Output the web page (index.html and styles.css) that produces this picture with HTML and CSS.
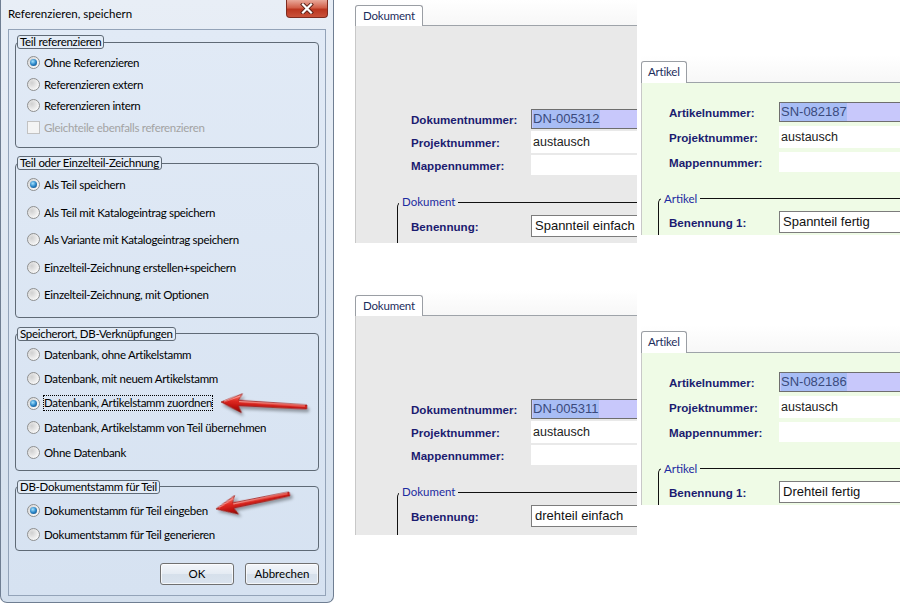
FILE: index.html
```html
<!DOCTYPE html>
<html lang="de">
<head>
    <meta charset="UTF-8">
    <meta name="viewport" content="width=device-width, initial-scale=1.0">
    <title>Referenzieren, speichern</title>
    <link rel="stylesheet" href="styles.css">
</head>
<body>
<div class="page">
    <div class="dialog">
        <div class="titlebar">
            <span class="title">Referenzieren, speichern</span>
            <span class="close-btn">
                <svg width="14" height="11" viewBox="0 0 14 11">
                    <path d="M3 1.5 L11 9.5 M11 1.5 L3 9.5" stroke="#5b2118" stroke-width="4" stroke-linecap="square"/>
                    <path d="M3 1.5 L11 9.5 M11 1.5 L3 9.5" stroke="#fff" stroke-width="2.2" stroke-linecap="square"/>
                </svg>
            </span>
        </div>
        <div class="client">
            <fieldset class="group g1">
                <legend>Teil referenzieren</legend>
                <div class="opt"><span class="radio on"></span>Ohne Referenzieren</div>
                <div class="opt"><span class="radio"></span>Referenzieren extern</div>
                <div class="opt"><span class="radio"></span>Referenzieren intern</div>
                <div class="opt disabled"><span class="check"></span>Gleichteile ebenfalls referenzieren</div>
            </fieldset>
            <fieldset class="group g2">
                <legend>Teil oder Einzelteil-Zeichnung</legend>
                <div class="opt"><span class="radio on"></span>Als Teil speichern</div>
                <div class="opt"><span class="radio"></span>Als Teil mit Katalogeintrag speichern</div>
                <div class="opt"><span class="radio"></span>Als Variante mit Katalogeintrag speichern</div>
                <div class="opt"><span class="radio"></span>Einzelteil-Zeichnung erstellen+speichern</div>
                <div class="opt"><span class="radio"></span>Einzelteil-Zeichnung, mit Optionen</div>
            </fieldset>
            <fieldset class="group g3">
                <legend>Speicherort, DB-Verknüpfungen</legend>
                <div class="opt"><span class="radio"></span>Datenbank, ohne Artikelstamm</div>
                <div class="opt"><span class="radio"></span>Datenbank, mit neuem Artikelstamm</div>
                <div class="opt"><span class="radio on"></span><span class="focus">Datenbank, Artikelstamm zuordnen</span></div>
                <div class="opt"><span class="radio"></span>Datenbank, Artikelstamm von Teil übernehmen</div>
                <div class="opt"><span class="radio"></span>Ohne Datenbank</div>
            </fieldset>
            <fieldset class="group g4">
                <legend>DB-Dokumentstamm für Teil</legend>
                <div class="opt"><span class="radio on"></span>Dokumentstamm für Teil eingeben</div>
                <div class="opt"><span class="radio"></span>Dokumentstamm für Teil generieren</div>
            </fieldset>
            <div class="buttons">
                <button class="btn">OK</button>
                <button class="btn">Abbrechen</button>
            </div>
        </div>
        <svg class="arrows" width="334" height="603" viewBox="0 0 334 603">
            <defs>
                <linearGradient id="red" x1="0" y1="-10" x2="0" y2="10" gradientUnits="userSpaceOnUse">
                    <stop offset="0" stop-color="#ff8a80"/>
                    <stop offset="0.4" stop-color="#e02a22"/>
                    <stop offset="0.75" stop-color="#b80f0b"/>
                    <stop offset="1" stop-color="#7a0000"/>
                </linearGradient>
                <filter id="shadow" x="-20%" y="-60%" width="140%" height="220%">
                    <feDropShadow dx="2" dy="3" stdDeviation="1.8" flood-color="#000" flood-opacity="0.35"/>
                </filter>
            </defs>
            <g transform="translate(220,402) rotate(3.3)" filter="url(#shadow)">
                <path d="M0 0 L21 -9.5 L17.5 -2.8 L86 -2 L86 2 L17.5 2.8 L21 9.5 Z" fill="url(#red)" stroke="#8a0a06" stroke-width="0.6"/>
                <path d="M3 -0.8 L19 -7 M18 -1.4 L84 -1" stroke="#ffb0a8" stroke-width="0.8" fill="none"/>
            </g>
            <g transform="translate(215,509) rotate(-11.6)" filter="url(#shadow)">
                <path d="M0 0 L21 -9.5 L17.5 -2.8 L75 -2 L75 2 L17.5 2.8 L21 9.5 Z" fill="url(#red)" stroke="#8a0a06" stroke-width="0.6"/>
                <path d="M3 -0.8 L19 -7 M18 -1.4 L73 -1" stroke="#ffb0a8" stroke-width="0.8" fill="none"/>
            </g>
        </svg>
    </div>

    <div class="shots">
        <div class="shot-row">
            <div class="panel doc">
                <div class="tabstrip"><span class="tab">Dokument</span></div>
                <div class="pbody">
                    <div class="frow"><label>Dokumentnummer:</label><span class="fld sel"><span class="hl">DN-005312</span></span></div>
                    <div class="frow"><label>Projektnummer:</label><span class="fld plain">austausch</span></div>
                    <div class="frow"><label>Mappennummer:</label><span class="fld plain empty"></span></div>
                    <fieldset class="sub">
                        <legend>Dokument</legend>
                        <div class="frow"><label>Benennung:</label><span class="fld box">Spannteil einfach</span></div>
                    </fieldset>
                </div>
            </div>
            <div class="panel art">
                <div class="tabstrip"><span class="tab">Artikel</span></div>
                <div class="pbody">
                    <div class="frow"><label>Artikelnummer:</label><span class="fld sel"><span class="hl">SN-082187</span></span></div>
                    <div class="frow"><label>Projektnummer:</label><span class="fld plain">austausch</span></div>
                    <div class="frow"><label>Mappennummer:</label><span class="fld plain empty"></span></div>
                    <fieldset class="sub">
                        <legend>Artikel</legend>
                        <div class="frow"><label>Benennung 1:</label><span class="fld box">Spannteil fertig</span></div>
                    </fieldset>
                </div>
            </div>
        </div>
        <div class="shot-row second">
            <div class="panel doc">
                <div class="tabstrip"><span class="tab">Dokument</span></div>
                <div class="pbody">
                    <div class="frow"><label>Dokumentnummer:</label><span class="fld sel"><span class="hl">DN-005311</span></span></div>
                    <div class="frow"><label>Projektnummer:</label><span class="fld plain">austausch</span></div>
                    <div class="frow"><label>Mappennummer:</label><span class="fld plain empty"></span></div>
                    <fieldset class="sub">
                        <legend>Dokument</legend>
                        <div class="frow"><label>Benennung:</label><span class="fld box">drehteil einfach</span></div>
                    </fieldset>
                </div>
            </div>
            <div class="panel art">
                <div class="tabstrip"><span class="tab">Artikel</span></div>
                <div class="pbody">
                    <div class="frow"><label>Artikelnummer:</label><span class="fld sel"><span class="hl">SN-082186</span></span></div>
                    <div class="frow"><label>Projektnummer:</label><span class="fld plain">austausch</span></div>
                    <div class="frow"><label>Mappennummer:</label><span class="fld plain empty"></span></div>
                    <fieldset class="sub">
                        <legend>Artikel</legend>
                        <div class="frow"><label>Benennung 1:</label><span class="fld box">Drehteil fertig</span></div>
                    </fieldset>
                </div>
            </div>
        </div>
    </div>
</div>
</body>
</html>
```

FILE: styles.css
```css
body {
    margin: 0;
    background: #fff;
    font-family: 'Lato', 'Segoe UI', sans-serif;
    font-size: 12px;
    color: #000;
}
.page {
    display: flex;
    align-items: flex-start;
    width: 900px;
    height: 604px;
    overflow: hidden;
}

/* dialog */
.dialog {
    position: relative;
    flex: none;
    width: 334px;
    height: 603px;
    box-sizing: border-box;
    border: 1px solid #6f7e92;
    border-top: none;
    border-radius: 0 0 7px 7px;
    background: linear-gradient(#e8eef6, #d3dfed);
    padding: 0 7px 6px;
    display: flex;
    flex-direction: column;
    font-size: 11.5px;
}
.titlebar {
    height: 29px;
    flex: none;
    display: flex;
    align-items: flex-start;
    justify-content: space-between;
}
.title {
    padding-top: 6px;
    line-height: 16px;
    color: #000;
}
.close-btn {
    width: 42px;
    height: 18px;
    margin-right: -2px;
    box-sizing: border-box;
    border: 1px solid #7e2b1f;
    border-top: none;
    border-radius: 0 0 4px 4px;
    background: linear-gradient(#e9a89a, #d2604a 45%, #bb3620 55%, #c9523a);
    display: flex;
    align-items: center;
    justify-content: center;
}
.client {
    flex: 1;
    border: 1px solid #93a3b8;
    background: linear-gradient(#e1eaf6, #d6e2f1);
    display: flex;
    flex-direction: column;
    letter-spacing: -0.3px;
}
.group {
    margin: 9px 6px 0;
    padding: 0;
    border: 1px solid #5f6a76;
    border-radius: 4px;
    min-width: 0;
}
.group legend {
    margin-left: 1px;
    padding: 0 2px;
    line-height: 12px;
    border: 1px solid #5f6a76;
    border-radius: 3px;
    background: #e3ecf7;
}
.g1 { margin-top: 5px; padding: 3px 0 9px; }
.g2 { margin-top: 8px; padding: 1px 0 8px; }
.g3 { padding: 1.5px 0 5px; }
.g4 { padding: 5px 0 3px; }
.opt {
    display: flex;
    align-items: center;
    padding-left: 11px;
}
.g1 .opt { height: 21.5px; }
.g2 .opt { height: 27.5px; }
.g3 .opt { height: 24.5px; }
.g4 .opt { height: 24px; }
.radio {
    position: relative;
    width: 13px;
    height: 13px;
    box-sizing: border-box;
    border-radius: 50%;
    border: 1px solid #8e8f8f;
    background: radial-gradient(circle at 35% 35%, #d0d0d0, #e8e8e8 45%, #fbfbfb 80%);
    margin-right: 4px;
    flex: none;
}
.radio.on::after {
    content: "";
    position: absolute;
    left: 2px;
    top: 2px;
    width: 7px;
    height: 7px;
    border-radius: 50%;
    background: radial-gradient(circle at 40% 35%, #a6e4ff, #2a86c8 50%, #0e3d70);
}
.check {
    width: 13px;
    height: 13px;
    box-sizing: border-box;
    border: 1px solid #c2c2c2;
    background: #f4f4f4;
    margin-right: 4px;
    flex: none;
}
.disabled { color: #a3a3a3; }
.focus {
    outline: 1px dotted #000;
    outline-offset: 0;
    line-height: 14px;
}
.buttons {
    display: flex;
    justify-content: flex-end;
    gap: 11px;
    margin: 12px 6px 0 0;
}
.btn {
    width: 74px;
    height: 22px;
    padding: 0;
    font-family: 'Lato', 'Segoe UI', sans-serif;
    font-size: 11.5px;
    color: #000;
    border: 1px solid #707070;
    border-radius: 3px;
    background: linear-gradient(#f3f6fa, #e4ebf3 50%, #d6e0eb 51%, #dae3ee);
    box-shadow: inset 0 0 0 1px rgba(255, 255, 255, 0.7);
}
.arrows {
    position: absolute;
    left: 0;
    top: 0;
    pointer-events: none;
}

/* screenshot panels */
.shots {
    margin-left: 21px;
    display: flex;
    flex-direction: column;
}
.shot-row {
    display: flex;
    align-items: flex-start;
}
.shot-row.second { margin-top: 47px; }
.panel {
    display: flex;
    flex-direction: column;
    overflow: hidden;
}
.panel.doc {
    width: 282px;
    height: 243px;
}
.second .panel.doc { height: 245px; }
.panel.art {
    width: 259px;
    height: 180px;
    margin: 55px 0 0 4px;
}
.second .panel.art { margin-top: 35px; }
.tabstrip {
    flex: none;
    display: flex;
    align-items: flex-end;
    box-sizing: border-box;
    border-bottom: 1px solid #9ea3a9;
    background: linear-gradient(#fff, #f7f7f7);
}
.doc .tabstrip { height: 26px; }
.art .tabstrip { height: 28px; }
.tab {
    margin-bottom: -1px;
    box-sizing: border-box;
    border: 1px solid #9a9ea4;
    border-bottom: none;
    border-radius: 3px 3px 0 0;
    background: #fff;
    color: #1c2d5c;
    font-size: 11.5px;
    letter-spacing: -0.2px;
}
.doc .tab {
    height: 21px;
    line-height: 19px;
    padding: 0 7px 0 7px;
}
.art .tab {
    height: 22px;
    line-height: 20px;
    padding: 0 6px;
}
.pbody {
    flex: 1;
    border-left: 1px solid #c8c8c8;
}
.doc .pbody {
    background: #e9e9e9;
    padding-top: 82px;
}
.art .pbody {
    background: #effbe6;
    padding-top: 18px;
}
.frow {
    display: flex;
    align-items: center;
    height: 22px;
    white-space: nowrap;
}
.doc .frow { margin-bottom: 1px; }
.art .frow { margin-bottom: 3px; }
.doc .pbody > .frow { padding-left: 55px; }
.art .pbody > .frow { padding-left: 27px; }
.frow label {
    flex: none;
    font-family: 'Liberation Sans', Arial, sans-serif;
    font-weight: bold;
    font-size: 11.6px;
    color: #1b1b70;
}
.doc .frow label { width: 120px; }
.art .frow label { width: 110px; }
.fld {
    flex: none;
    width: 140px;
    box-sizing: border-box;
    font-family: 'Liberation Sans', Arial, sans-serif;
    background: #fff;
}
.fld.sel {
    height: 20px;
    border: 1px solid #6e6e6e;
    background: #c8c8fb;
    font-size: 13px;
    line-height: 18px;
    color: #3a4a7c;
    padding-left: 1px;
}
.hl {
    display: inline-block;
    background: #a8bdf5;
}
.fld.plain {
    height: 22px;
    line-height: 22px;
    font-size: 12.5px;
    color: #222;
    padding-left: 2px;
}
.fld.plain.empty { height: 20px; }
.fld.box {
    height: 22px;
    border: 1px solid #7c7c7c;
    font-size: 13px;
    line-height: 20px;
    color: #111;
    padding-left: 3px;
}
.sub {
    min-width: 0;
    border: none;
    border-top: 1px solid #111;
    border-left: 1px solid #111;
    border-top-left-radius: 5px;
}
.sub legend {
    padding: 0 3px;
    line-height: 14px;
    font-size: 11.5px;
    color: #1c2aa0;
}
.doc .sub {
    margin: 19px 0 0 41px;
    padding: 6px 0 40px 13px;
}
.doc .sub legend { margin-left: -12px; }
.art .sub {
    margin: 18.5px 0 0 16px;
    padding: 5.5px 0 40px 10px;
}
.art .sub legend { margin-left: -8px; }
```
